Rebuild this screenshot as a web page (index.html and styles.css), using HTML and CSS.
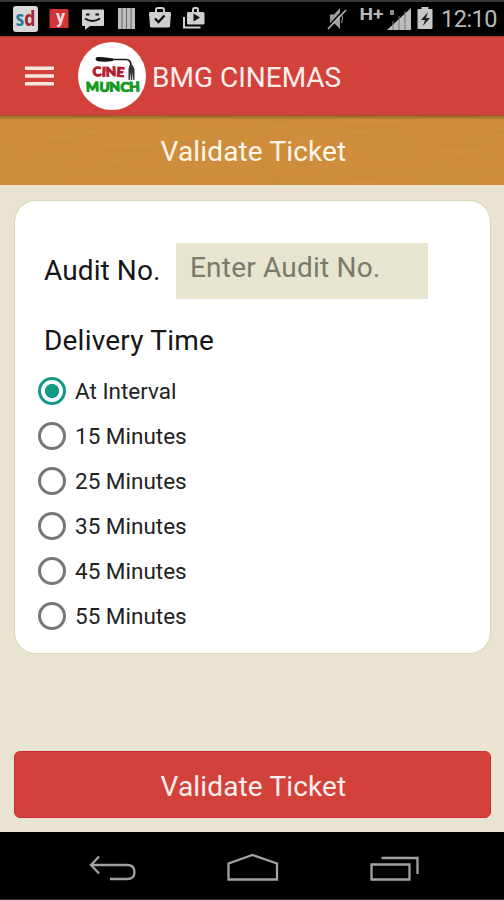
FILE: index.html
```html
<!DOCTYPE html>
<html lang="en">
<head>
<meta charset="utf-8">
<title>BMG Cinemas</title>
<link rel="stylesheet" href="styles.css">
</head>
<body>
<div class="screen">
  <div class="status">
    <svg class="status-icons" viewBox="0 0 504 36">
      <rect x="13" y="6" width="25" height="26" rx="3" fill="#d9d9d9"/>
      <text x="15.500" y="26" class="sd" textLength="20" lengthAdjust="spacingAndGlyphs"><tspan fill="#247ca5">s</tspan><tspan fill="#a92430">d</tspan></text>
      <rect x="49.500" y="9" width="19" height="19" rx="1" fill="#d23437"/>
      <text x="56" y="23" class="yy" fill="#f3dede">y</text>
      <path d="M83 9.500h20q1 0 1 1V25q0 1-1 1H90l-5 4v-4h-2q-1 0-1-1V10.500q0-1 1-1z" fill="#d2d2d2"/>
      <path d="M86 14.500h3.500M95.500 14.500h3.500M85 18.500q7.500 5 15 0" fill="none" stroke="#111" stroke-width="2"/>
      <path d="M118 8h17v21h-17z" fill="#bdbdbd"/>
      <path d="M122 8v21M126.500 8v21M131 8v21" stroke="#686868" stroke-width="1"/>
      <path d="M150 12h20q1 0 1 2l-1 12q0 1.500-2 1.500h-16q-2 0-2-1.500l-1-12q0-2 1-2z" fill="#d0d0d0"/>
      <path d="M156 12V10q0-2 2-2h4q2 0 2 2v2" fill="none" stroke="#d0d0d0" stroke-width="2"/>
      <path d="M155 18.500l3.500 3.500 6-6.500" fill="none" stroke="#111" stroke-width="2.300"/>
      <path d="M188 12h15q1.500 0 1.500 1.500V23q0 1.500-1.500 1.500h-15q-1 0-1-1.500v-9.500q0-1.500 1-1.500z" fill="#d0d0d0"/>
      <path d="M193 12v-2q0-2 1.500-2h2q1.500 0 1.500 2v2M184 17v10.500h16.500" fill="none" stroke="#d0d0d0" stroke-width="2"/>
      <path d="M193.500 13.500v8l6.500-4z" fill="#111"/>
      <path d="M330 14.500h4l6-6.500v21l-6-6h-4z" fill="#9c9c9c"/>
      <path d="M327 27.500L344.500 9" stroke="#000" stroke-width="1.500"/>
      <path d="M328 29L346 10" stroke="#b5b5b5" stroke-width="1.700"/>
      <path d="M341.500 14q2 4 0 9" fill="none" stroke="#aaa"/>
      <text x="359.500" y="19.500" class="net" textLength="24" lengthAdjust="spacingAndGlyphs">H+</text>
      <path d="M387 30L411 8v22z" fill="#bcbcbc"/>
      <path d="M393 21v9M399 16v14M405 11v19" stroke="#777"/>
      <path d="M390 10h4v5h-4z" fill="#888"/>
      <path d="M418.500 9h3V7h7v2h3q1 0 1 1v18q0 1-1 1h-13q-1 0-1-1V10q0-1 1-1z" fill="#c7c7c7"/>
      <path d="M428 12l-7 8h4l-2 6 7-8h-4z" fill="#222"/>
    </svg>
    <span class="clock">12:10</span>
  </div>
  <header class="appbar">
    <svg class="menu" viewBox="0 0 30 20"><path d="M1 2.200h29M1 10h29M1 17.800h29" stroke="#fbe6e4" stroke-width="3.400"/></svg>
    <svg class="logo" viewBox="0 0 68 68">
      <circle cx="34" cy="34" r="34" fill="#fff"/>
      <path d="M30 17.500H48Q53 17.500 53 24" fill="none" stroke="#151515" stroke-width="1.700"/>
      <path d="M19 15q7-.5 16 1.500v2.500q-9 1.500-16 0-3-2 0-4z" fill="#151515"/>
      <path d="M51.500 23h3l2 4v11h-1.200l-.8-8-.3 8h-1.400l-.3-8-.8 8H50.500V27z" fill="#333"/>
      <text x="15" y="34.500" class="brand cine" rotate="-4 2 -3 4" textLength="31" lengthAdjust="spacingAndGlyphs">CINE</text>
      <text x="8" y="49.500" class="brand munch" rotate="-2 2 -2 2 -2" textLength="54" lengthAdjust="spacingAndGlyphs">MUNCH</text>
    </svg>
    <h1 class="name">BMG CINEMAS</h1>
  </header>
  <div class="banner">
    <svg class="grain" viewBox="0 0 504 69" preserveAspectRatio="none">
      <filter id="wood" x="0" y="0" width="100%" height="100%"><feTurbulence type="fractalNoise" baseFrequency=".012 .28" numOctaves="3" seed="4"/><feColorMatrix values="0 0 0 0 .45  0 0 0 0 .24  0 0 0 0 .05  .9 0 0 0 -.28"/></filter>
      <rect width="504" height="69" filter="url(#wood)"/>
    </svg>
    <h2 class="banner-title">Validate Ticket</h2>
  </div>
  <main class="content">
    <form class="card">
      <div class="field">
        <label class="label" for="audit">Audit No.</label>
        <input class="input" id="audit" placeholder="Enter Audit No.">
      </div>
      <div class="label delivery">Delivery Time</div>
      <div class="options">
        <label class="option"><span class="radio on"></span>At Interval</label>
        <label class="option"><span class="radio"></span>15 Minutes</label>
        <label class="option"><span class="radio"></span>25 Minutes</label>
        <label class="option"><span class="radio"></span>35 Minutes</label>
        <label class="option"><span class="radio"></span>45 Minutes</label>
        <label class="option"><span class="radio"></span>55 Minutes</label>
      </div>
    </form>
    <button class="submit">Validate Ticket</button>
  </main>
  <nav class="nav">
    <svg class="nav-icons" viewBox="0 0 504 68" fill="none" stroke="#a2a2a2" stroke-width="2.300">
      <path d="M99 24.500l-8 8.500 8 8.500M91 33h36q7.500 0 7.500 7T127 47h-17"/>
      <path d="M228.500 47.500V31.500L252.500 23l24.500 8.500v16z"/>
      <path d="M371.500 32.500h38v15h-38zM381.500 26H417.500v16"/>
    </svg>
  </nav>
</div>
</body>
</html>
```
FILE: styles.css
```css
* { box-sizing: border-box; }
body { margin: 0; background: #000; }
.screen {
  width: 504px;
  height: 900px;
  display: flex;
  flex-direction: column;
  overflow: hidden;
  background: #e9e4d1;
  font-family: Roboto, "Liberation Sans", sans-serif;
}
.status {
  position: relative;
  height: 36px;
  flex: none;
  display: flex;
  justify-content: flex-end;
  background: #000;
  border-top: 2px solid #383838;
}
.status-icons { position: absolute; left: 0; top: -2px; width: 504px; height: 36px; }
.sd { font: bold 21px "Open Sans", sans-serif; }
.yy { font: bold 18px Roboto, sans-serif; }
.net { font: bold 16px Roboto, sans-serif; fill: #b9b9b9; }
.clock {
  position: relative;
  padding-right: 7px;
  font-size: 23.500px;
  line-height: 34px;
  letter-spacing: -.5px;
  color: #b9b9b9;
}
.appbar {
  height: 80px;
  flex: none;
  display: flex;
  align-items: center;
  padding-left: 24px;
  background: #d2423a;
  border-top: 1px solid #a8332e;
  border-bottom: 1px solid #9a5630;
}
.menu { width: 30px; height: 20px; }
.logo { width: 68px; height: 68px; margin-left: 24px; }
.brand { font: 900 13px Lato, sans-serif; stroke-width: 1px; }
.cine { fill: #b51a2c; stroke: #b51a2c; }
.munch { fill: #16981f; stroke: #16981f; }
.name { margin: 2px 0 0 6px; font-size: 28px; font-weight: 400; color: #fdeeee; }
.banner {
  position: relative;
  height: 69px;
  flex: none;
  display: flex;
  align-items: center;
  justify-content: center;
  background: linear-gradient(#9a6728, #d18e3b 4px);
}
.grain { position: absolute; inset: 0; width: 100%; height: 100%; opacity: .5; }
.banner-title {
  position: relative;
  margin: 2px 0 0 3px;
  font-size: 28px;
  font-weight: 400;
  letter-spacing: .15px;
  color: #fff7ea;
}
.content {
  height: 647px;
  flex: none;
  display: flex;
  flex-direction: column;
  justify-content: space-between;
  padding: 15px 13px 14px 14px;
}
.card {
  width: 477px;
  height: 454px;
  padding: 42px 0 0 23px;
  background: #fff;
  border: 1px solid #d9d8b4;
  border-radius: 22px;
}
.field { display: flex; align-items: center; padding-left: 6px; }
.label { font-size: 28px; line-height: 34px; color: #151515; letter-spacing: .1px; }
.field .label { width: 132px; }
.input {
  width: 252px;
  height: 56px;
  padding: 0 0 7px 14px;
  border: 0;
  border-radius: 0;
  background: #e7e4d0;
  font: 28px Roboto, sans-serif;
  letter-spacing: .2px;
}
.input::placeholder { color: #7b796b; opacity: 1; }
.delivery { margin: 25px 0 0 6px; letter-spacing: .2px; }
.options { margin-top: 10.500px; }
.option {
  height: 45px;
  display: flex;
  align-items: center;
  gap: 9px;
  font-size: 22.500px;
  color: #222;
  letter-spacing: 0;
}
.radio {
  width: 28px;
  height: 28px;
  border: 3px solid #777;
  border-radius: 50%;
}
.radio.on { border-color: #149988; background: radial-gradient(circle, #149988 0 6.700px, #fff 7.500px); }
.submit {
  width: 477px;
  height: 67px;
  padding: 4px 0 0 2px;
  border: 1px solid #c92c2b;
  border-radius: 6px;
  background: #d2423a;
  font: 28px Roboto, sans-serif;
  letter-spacing: .15px;
  color: #fdeeee;
}
.nav { height: 68px; flex: none; background: #000; border-bottom: 1px solid #333; }
.nav-icons { display: block; width: 504px; height: 68px; }
```
